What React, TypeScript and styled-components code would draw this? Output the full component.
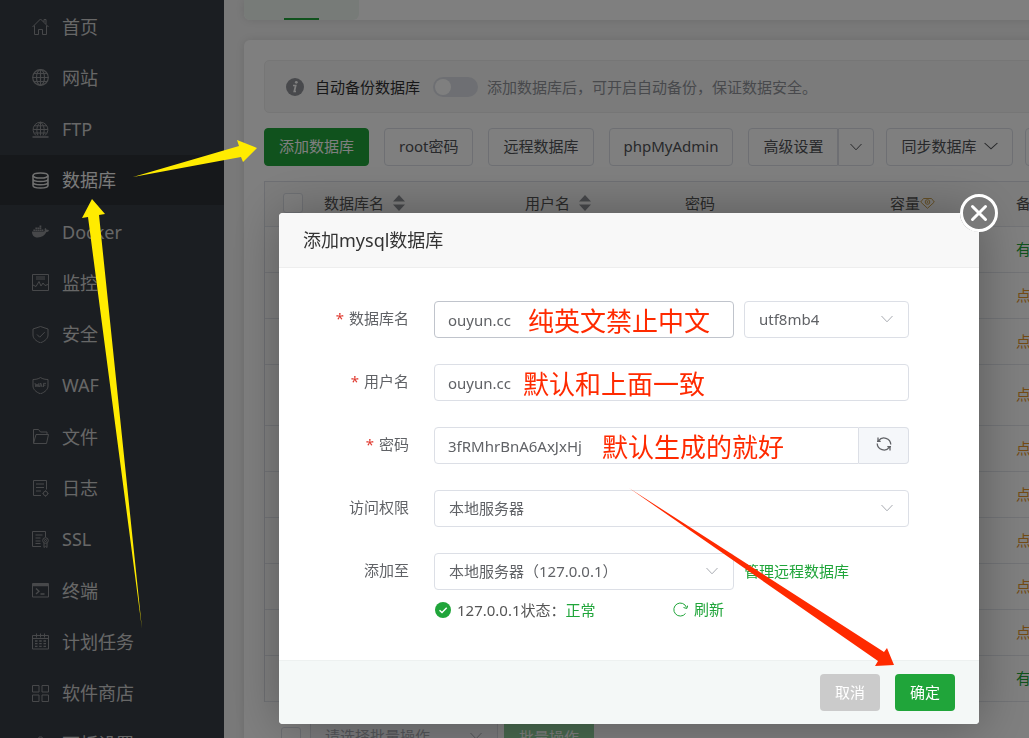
import React from 'react';
import styled, { createGlobalStyle } from 'styled-components';
import { FaDocker } from 'react-icons/fa';

const green = '#20a53a';
const border = '#dcdfe6';

const GlobalStyle = createGlobalStyle`
  * { box-sizing: border-box; }
  html, body, #root { height: 100%; }
  body {
    margin: 0;
    overflow: hidden;
    background: #f2f2f2;
    color: #555;
    font: 15px/20px "Noto Sans", "Noto Sans CJK SC", sans-serif;
  }
  button, input, select { font: inherit; color: inherit; margin: 0; }
  button { cursor: pointer; }
  a { text-decoration: none; }
`;

const Page = styled.div`
  display: flex;
  height: 100vh;
  overflow: hidden;
`;

/* ---------- sidebar ---------- */

const Sidebar = styled.nav`
  flex: 0 0 224px;
  background: #373d45;
`;

const Menu = styled.ul`
  display: flex;
  flex-direction: column;
  justify-content: space-between;
  min-height: calc(100vh + 31px);
  margin: 0;
  padding: 1px 0 0;
  list-style: none;
`;

const MenuLink = styled.a<{ $active?: boolean }>`
  display: flex;
  align-items: center;
  gap: 13px;
  height: 50px;
  padding: 1px 0 0 32px;
  font-size: 18px;
  line-height: 24px;
  color: ${p => (p.$active ? '#f4f4f4' : '#cfcfcf')};
  background: ${p => (p.$active ? '#2c3036' : 'transparent')};

  svg {
    flex: none;
    width: 17px;
    height: 17px;
    color: ${p => (p.$active ? '#e0e0e0' : '#8f9194')};
  }
`;

/* ---------- main area ---------- */

const Main = styled.main`
  flex: 1 0 1034px;
  padding: 0 20px;
`;

const TabBar = styled.div`
  display: flex;
  height: 20px;
  margin-bottom: 20px;
  background: #fff;
  border-radius: 0 0 6px 6px;
  box-shadow: 0 0 8px rgba(0, 0, 0, 0.1);
`;

const ActiveTab = styled.div`
  display: flex;
  align-items: flex-end;
  justify-content: center;
  width: 115px;
  background: #eff7f1;
  border-radius: 0 0 6px 6px;

  &::after {
    content: '';
    width: 35px;
    height: 2px;
    background: ${green};
  }
`;

const Card = styled.section`
  padding: 20px;
  min-height: 760px;
  background: #fff;
  border-radius: 6px;
  box-shadow: 0 0 8px rgba(0, 0, 0, 0.1);
`;

const Notice = styled.div`
  display: flex;
  align-items: center;
  height: 53px;
  padding: 0 21px;
  margin-bottom: 15px;
  background: #f6f6f6;
  border: 1px solid #ededed;
  border-radius: 5px;
  color: #303133;
`;

const InfoIcon = styled.svg`
  width: 18px;
  height: 18px;
  margin-right: 11px;
`;

const NoticeHint = styled.span`
  color: #909399;
`;

const Switch = styled.input`
  appearance: none;
  width: 45px;
  height: 20px;
  margin: 0 9px 0 13px;
  padding: 2px;
  background: ${border};
  border-radius: 10px;

  &::before {
    content: '';
    display: block;
    width: 16px;
    height: 16px;
    border-radius: 50%;
    background: #fff;
  }
`;

const Toolbar = styled.div`
  display: flex;
  gap: 12px;
  margin-bottom: 15px;
`;

const ButtonGroup = styled.div`
  display: flex;
  gap: 15px;
  padding-right: 3px;
`;

const ToolButton = styled.button<{ $primary?: boolean }>`
  display: flex;
  align-items: center;
  gap: 8px;
  height: 38px;
  padding: 0 14px 2px;
  border: 1px solid ${p => (p.$primary ? green : border)};
  border-radius: 4px;
  background: ${p => (p.$primary ? green : '#fff')};
  color: ${p => (p.$primary ? '#fff' : '#505256')};
  white-space: nowrap;
`;

const SplitButton = styled.div`
  display: flex;

  ${ToolButton}:first-child {
    border-radius: 4px 0 0 4px;
  }
  ${ToolButton}:last-child {
    padding: 0 11px;
    border-radius: 0 4px 4px 0;
  }
`;

const Table = styled.table`
  width: 100%;
  table-layout: fixed;
  border-collapse: separate;
  border-spacing: 0;
  border: 1px solid ${border};
  border-width: 1px 1px 0 1px;

  th, td {
    height: 46px;
    padding: 0 14px 2px;
    text-align: left;
    font-weight: 400;
    white-space: nowrap;
    border-bottom: 1px solid #e4e7ed;
  }
  th { height: 45px; background: #f8f8f8; }
  th:first-child, td:first-child { padding: 0 0 2px 18px; }
`;

const HeadCell = styled.span`
  display: flex;
  align-items: center;
`;

const SortIcon = styled.svg`
  width: 12px;
  height: 16px;
  margin-left: 9px;
`;

const TallRow = styled.tr`
  td { height: 61px; }
`;

const BackupLink = styled.a<{ $done?: boolean }>`
  color: ${p => (p.$done ? green : '#e6962c')};
`;

const Check = styled.input`
  appearance: none;
  display: block;
  width: 20px;
  height: 20px;
  border: 1px solid ${border};
  border-radius: 3px;
  background: #fff;
`;

const BatchBar = styled.div`
  display: flex;
  align-items: center;
  padding: 16px 0 0 17px;

  ${Check} { margin-right: 9px; }
`;

const BatchButton = styled.button`
  width: 90px;
  height: 32px;
  margin-left: 6px;
  border: 0;
  border-radius: 3px;
  background: #90d29d;
  color: #fff;
`;

/* ---------- dialog ---------- */

const Overlay = styled.div`
  position: fixed;
  inset: 0;
  padding: 213px 50px 0 279px;
  background: rgba(0, 0, 0, 0.5);
`;

const Dialog = styled.div`
  position: relative;
  max-width: 700px;
  background: #fff;
  border-radius: 4px;
  box-shadow: 1px 1px 50px rgba(0, 0, 0, 0.3);
`;

const DialogHeader = styled.header`
  display: flex;
  align-items: center;
  height: 55px;
  padding: 0 24px;
  background: #f8f8f8;
  border-bottom: 1px solid #eee;
  border-radius: 4px 4px 0 0;
`;

const DialogTitle = styled.h2`
  margin: 0;
  font-size: 18px;
  line-height: 24px;
  font-weight: 400;
  color: #333;
`;

const CloseButton = styled.button`
  position: absolute;
  top: -19px;
  right: -19px;
  display: flex;
  width: 38px;
  height: 38px;
  padding: 0;
  border: 0;
  border-radius: 50%;
  background: #797979;
`;

const Form = styled.form`
  padding: 33px 70px 40px 0;
`;

const FormRow = styled.div`
  display: flex;
  align-items: center;
  height: 37px;

  & + & { margin-top: 26px; }
`;

const Label = styled.label<{ $required?: boolean }>`
  flex: 0 0 155px;
  padding: 0 25px 3px 0;
  text-align: right;
  color: #606266;

  &::before {
    content: ${p => (p.$required ? "'*'" : 'none')};
    margin-right: 5px;
    color: #e0392f;
  }
`;

const Field = styled.div<{ $width?: number }>`
  position: relative;
  display: flex;
  flex: ${p => (p.$width ? `0 0 ${p.$width}px` : '1 1 0')};
  min-width: 0;
  height: 37px;
`;

const TextInput = styled.input<{ $hover?: boolean; $joined?: boolean }>`
  flex: 1;
  min-width: 0;
  padding: 0 13px;
  border: 1px solid ${p => (p.$hover ? '#c0c4cc' : border)};
  border-radius: ${p => (p.$joined ? '4px 0 0 4px' : '4px')};
  background: #fff;
  color: #606266;
  outline: none;
`;

const Select = styled.select`
  flex: 1;
  min-width: 0;
  padding: 0 14px 2px;
  border: 1px solid ${border};
  border-radius: 4px;
  appearance: none;
  background: #fff;
  color: #606266;
  opacity: 1;

  &:disabled { background: #f5f7fa; color: #a8abb2; }
`;

const FieldArrow = styled.svg`
  position: absolute;
  right: 16px;
  top: 14px;
  width: 12px;
  height: 8px;
  color: #a8abb2;
  pointer-events: none;
`;

const InputAddon = styled.button`
  display: flex;
  align-items: center;
  justify-content: center;
  width: 50px;
  padding: 0 0 3px;
  border: 1px solid ${border};
  border-left: 0;
  border-radius: 0 4px 4px 0;
  background: #f5f7fa;
  color: #606266;
`;

const Gap = styled.div`
  flex: 0 0 10px;
`;

const GreenLink = styled.a`
  display: flex;
  align-items: center;
  gap: 6px;
  padding-bottom: 2px;
  color: ${green};
  white-space: nowrap;
`;

const StatusRow = styled.div`
  display: flex;
  align-items: center;
  width: 445px;
  height: 20px;
  margin-top: 10px;
  padding-left: 156px;

  > svg { margin-right: 6px; }
  > a { margin-left: auto; }
`;

const StatusOk = styled.span`
  color: ${green};
`;

const DialogFooter = styled.footer`
  display: flex;
  justify-content: flex-end;
  gap: 15px;
  padding: 13px 24px 13px;
  background: #f4f8f7;
  border-top: 1px solid #edf1f0;
  border-radius: 0 0 4px 4px;
`;

const FooterButton = styled.button<{ $primary?: boolean }>`
  width: 60px;
  height: 37px;
  padding: 0 0 2px;
  border: 0;
  border-radius: 4px;
  background: ${p => (p.$primary ? green : '#cbcbcb')};
  color: #fff;
`;

/* ---------- tutorial marks drawn over the page ---------- */

const Note = styled.span<{ $left: number }>`
  position: absolute;
  left: ${p => p.$left}px;
  top: 0;
  font-size: 26px;
  line-height: 40px;
  color: #ff2a00;
  white-space: nowrap;
  pointer-events: none;
`;

const Arrows = styled.svg`
  position: fixed;
  left: 0;
  top: 0;
  width: 1029px;
  height: 738px;
  pointer-events: none;
`;

const Chevron = ({ width = 12 }: { width?: number }) => (
  <svg width={width} height={8} viewBox="0 0 12 8" fill="none" stroke="currentColor" strokeWidth="1" preserveAspectRatio="none">
    <path d="M.5 1 6 6.800 11.500 1" />
  </svg>
);

const SelectArrow = () => (
  <FieldArrow viewBox="0 0 12 8" fill="none" stroke="currentColor" strokeWidth="1">
    <path d="M.5 1 6 6.800 11.500 1" />
  </FieldArrow>
);

const Glyph = ({ children }: { children: React.ReactNode }) => (
  <svg viewBox="0 0 17 17" fill="none" stroke="currentColor" strokeWidth="1">
    {children}
  </svg>
);

const menu = [
  { text: '首页', icon: <Glyph><path d="M.5 9 8.500 1 16.500 9M2.500 7.500v9h4v-5h4v5h4v-9M12 4V1.500h2V6" /></Glyph> },
  { text: '网站', icon: <Glyph><g strokeWidth="1.200"><circle cx="8.500" cy="8.500" r="7.800" /><ellipse cx="8.500" cy="8.500" rx="4" ry="7.800" /><path d="M8.500.500v16M.5 8.500h16M2 4.500h13M2 12.500h13" /></g></Glyph> },
  { text: 'FTP', icon: <Glyph><path d="M4 14.500a7.400 7.400 0 1 1 9 0M6 14.500C4 10 4.500 4 8.500 1.200C12.500 4 13 10 11 14.500M8.500 1v13.500M1.200 8.500h14.600M2.500 4.800h12M2.500 12h12" /><path d="M.5 16h16" strokeWidth="1.500" /></Glyph> },
  { text: '数据库', active: true, icon: <Glyph><g strokeWidth="1.500"><ellipse cx="8.500" cy="3.500" rx="7.500" ry="2.600" /><path d="M1 3.500v10c0 3.400 15 3.400 15 0v-10M1 7c0 3.400 15 3.400 15 0M1 10.300c0 3.400 15 3.400 15 0" /></g></Glyph> },
  { text: 'Docker', icon: <FaDocker /> },
  { text: '监控', icon: <Glyph><path d="M.5.500h16v16H.500zM4 3h9M4 5h9M1 11l3 1.500L7 7.500l2 4.500 2-3 2 2.500 3-1" /></Glyph> },
  { text: '安全', icon: <Glyph><path d="M8.500.500 16 3v6c0 3-2.500 6-7.500 7.800C3.500 15 1 12 1 9V3zM5 8.500l2.700 2.700 5-5" /></Glyph> },
  { text: 'WAF', icon: <Glyph><path d="M8.500.500c2 1.500 5 2 7.500 2v6.500c0 3-2.500 6-7.500 7.800C3.500 15 1 12 1 9V2.500c2.500 0 5.500-.5 7.500-2z" /><path d="m3 6 .9 4L5 7l1.100 3L7 6M7.300 10l1.400-4 1.500 4M7.800 9h2M11.500 10V6.400H14M11.500 8.200h2" strokeWidth=".9" /></Glyph> },
  { text: '文件', icon: <Glyph><path d="M1.500 15V1.500h5l2 2.500h6.500v2.500M1.500 15.500h13l2-9H4z" /></Glyph> },
  { text: '日志', icon: <Glyph><path d="M9 15.500H1.500v-15h13v9M4 4h8M4 7.500h8M4 11h5" /><circle cx="13.500" cy="13.500" r="2.200" /><path d="M13.500 10.300v1M13.500 15.700v1M10.500 13.500h1M15.500 13.500h1" /></Glyph> },
  { text: 'SSL', icon: <Glyph><path d="M9 15.500H.500v-15h13V6M3.500 4h7M3.500 7h5M3.500 10h5M3.500 12.500h5" /><circle cx="13.500" cy="9.500" r="2.800" /><circle cx="13.500" cy="9.500" r="1" /><path d="M12 12v4.500l1.500-1.200 1.500 1.200V12" /></Glyph> },
  { text: '终端', icon: <Glyph><path d="M.5 1.500h16v13.500H.500z" /><path d="M1 3h15" strokeWidth="2.500" /><path d="m4 6.500 3 2.700-3 2.800M8.500 12h4" strokeWidth="1.300" /></Glyph> },
  { text: '计划任务', icon: <Glyph><path d="M.5 2.500h16v13.500H.500zM.500 5.500h16M4.500.500v4M8.500.500v4M12.500.500v4" /><path d="M3 8h2.500M7.200 8h2.500M11.500 8H14M3 10.700h2.500M7.200 10.700h2.500M11.500 10.700H14M3 13.400h2.500M7.200 13.400h2.500M11.500 13.400H14" strokeWidth="1.300" /></Glyph> },
  { text: '软件商店', icon: <Glyph><path d="M.5.500h6.500v6.500H.500zM10 .500h6.500v6.500H10zM.500 10h6.500v6.500H.500zM10 10h6.500v6.500H10z" /></Glyph> },
  { text: '面板设置', icon: <Glyph><path d="m7 1-.5 2L4 4.500 2 4 .800 6.500 2.500 8.500l-1.700 2L2 13l2-.5L6.500 14l.5 2h3l.5-2 2.500-1.500 2 .5 1.200-2.500-1.700-2 1.700-2L15 4l-2 .5L10.500 3 10 1z" /><circle cx="8.500" cy="8.500" r="2.500" /></Glyph> },
];

const Sort = () => (
  <SortIcon viewBox="0 0 12 16" fill="#8e9196">
    <path d="M6 0 12 6.500H0zM0 9.500h12L6 16z" />
  </SortIcon>
);

const backups = ['有备份', '点击备份', '点击备份', '点击备份', '点击备份', '点击备份', '点击备份', '点击备份', '点击备份', '有备份'];

export default function App() {
  return (
    <>
      <GlobalStyle />
      <Page>
        <Sidebar>
          <Menu>
            {menu.map(item => (
              <li key={item.text}>
                <MenuLink href="#" $active={item.active}>{item.icon}{item.text}</MenuLink>
              </li>
            ))}
          </Menu>
        </Sidebar>

        <Main>
          <TabBar><ActiveTab /></TabBar>
          <Card>
            <Notice>
              <InfoIcon viewBox="0 0 18 18">
                <circle cx="9" cy="9" r="9" fill="#909399" />
                <circle cx="10.300" cy="4.300" r="1.400" fill="#fff" />
                <path d="M7 7.500h2.700L8.300 13.500h1.700" fill="none" stroke="#fff" strokeWidth="1.700" />
              </InfoIcon>
              <label htmlFor="auto-backup">自动备份数据库</label>
              <Switch type="checkbox" role="switch" id="auto-backup" />
              <NoticeHint>添加数据库后，可开启自动备份，保证数据安全。</NoticeHint>
            </Notice>

            <Toolbar>
              <ButtonGroup>
                <ToolButton $primary>添加数据库</ToolButton>
                <ToolButton>root密码</ToolButton>
                <ToolButton>远程数据库</ToolButton>
                <ToolButton>phpMyAdmin</ToolButton>
              </ButtonGroup>
              <SplitButton>
                <ToolButton>高级设置</ToolButton>
                <ToolButton aria-label="更多设置"><Chevron /></ToolButton>
              </SplitButton>
              <ToolButton>同步数据库<Chevron width={14} /></ToolButton>
              <ToolButton aria-label="回收站" />
            </Toolbar>

            <Table>
              <colgroup>
                <col style={{ width: 45 }} />
                <col style={{ width: 201 }} />
                <col style={{ width: 160 }} />
                <col style={{ width: 205 }} />
                <col style={{ width: 126 }} />
                <col />
              </colgroup>
              <thead>
                <tr>
                  <th><Check type="checkbox" aria-label="全选" /></th>
                  <th><HeadCell>数据库名<Sort /></HeadCell></th>
                  <th><HeadCell>用户名<Sort /></HeadCell></th>
                  <th>密码</th>
                  <th>
                    <HeadCell>
                      容量
                      <svg width="15" height="12" viewBox="0 0 15 12" fill="none" stroke="#c9a050">
                        <path d="M.700 5 3.500 1.500h8L14.300 5 7.500 11.300z" />
                        <circle cx="7.500" cy="5" r="2.300" />
                        <circle cx="7.500" cy="5" r=".6" />
                      </svg>
                    </HeadCell>
                  </th>
                  <th>备份</th>
                </tr>
              </thead>
              <tbody>
                {backups.map((text, i) => {
                  const Row = i === 3 ? TallRow : 'tr';
                  return (
                    <Row key={i}>
                      <td /><td /><td /><td /><td />
                      <td><BackupLink href="#" $done={text === '有备份'}>{text}</BackupLink></td>
                    </Row>
                  );
                })}
              </tbody>
            </Table>

            <BatchBar>
              <Check type="checkbox" aria-label="选择全部" />
              <Field $width={188}>
                <Select disabled aria-label="批量操作"><option>请选择批量操作</option></Select>
                <SelectArrow />
              </Field>
              <BatchButton disabled>批量操作</BatchButton>
            </BatchBar>
          </Card>
        </Main>
      </Page>

      <Overlay>
        <Dialog role="dialog" aria-labelledby="dialog-title">
          <DialogHeader><DialogTitle id="dialog-title">添加mysql数据库</DialogTitle></DialogHeader>
          <CloseButton aria-label="关闭">
            <svg width="38" height="38" viewBox="0 0 38 38" fill="none" stroke="#fff">
              <circle cx="19" cy="19" r="17.500" strokeWidth="3" />
              <path d="m12.500 12.500 13 13m0-13-13 13" strokeWidth="3" strokeLinecap="round" />
            </svg>
          </CloseButton>

          <Form>
            <FormRow>
              <Label $required htmlFor="db-name">数据库名</Label>
              <Field $width={300}>
                <TextInput $hover id="db-name" defaultValue="ouyun.cc" />
                <Note $left={94}>纯英文禁止中文</Note>
              </Field>
              <Gap />
              <Field>
                <Select aria-label="字符集"><option>utf8mb4</option></Select>
                <SelectArrow />
              </Field>
            </FormRow>
            <FormRow>
              <Label $required htmlFor="db-user">用户名</Label>
              <Field>
                <TextInput id="db-user" defaultValue="ouyun.cc" />
                <Note $left={89}>默认和上面一致</Note>
              </Field>
            </FormRow>
            <FormRow>
              <Label $required htmlFor="db-pass">密码</Label>
              <Field>
                <TextInput $joined id="db-pass" defaultValue="3fRMhrBnA6AxJxHj" />
                <InputAddon type="button" aria-label="随机密码">
                  <svg width="16" height="16" viewBox="0 0 16 16" fill="none" stroke="currentColor" strokeWidth="1.300">
                    <path d="M1 5.300h3.700M2 1.500v3.800M2.500 4.800A6.800 6.800 0 0 1 14.800 8.500M15 10.700h-3.700M14 14.500v-3.800M13.500 11.200A6.800 6.800 0 0 1 1.200 7.500" />
                  </svg>
                </InputAddon>
                <Note $left={168}>默认生成的就好</Note>
              </Field>
            </FormRow>
            <FormRow>
              <Label htmlFor="db-access">访问权限</Label>
              <Field>
                <Select id="db-access"><option>本地服务器</option></Select>
                <SelectArrow />
              </Field>
            </FormRow>
            <FormRow>
              <Label htmlFor="db-server">添加至</Label>
              <Field $width={300}>
                <Select id="db-server"><option>本地服务器（127.0.0.1）</option></Select>
                <SelectArrow />
              </Field>
              <Gap />
              <GreenLink href="#">管理远程数据库</GreenLink>
            </FormRow>
            <StatusRow>
              <svg width="16" height="16" viewBox="0 0 16 16">
                <circle cx="8" cy="8" r="8" fill={green} />
                <path d="m4.500 8.200 2.500 2.300 4.700-4.700" fill="none" stroke="#fff" strokeWidth="1.400" />
              </svg>
              <span>127.0.0.1状态：</span>
              <StatusOk>正常</StatusOk>
              <GreenLink href="#">
                <svg width="15" height="15" viewBox="0 0 15 15" fill="none" stroke="currentColor">
                  <path d="M12.500 11.500A6.500 6.500 0 1 1 13.500 5.500M14.800 3.500l-1 3-3.300-1" />
                </svg>
                刷新
              </GreenLink>
            </StatusRow>
          </Form>

          <DialogFooter>
            <FooterButton>取消</FooterButton>
            <FooterButton $primary>确定</FooterButton>
          </DialogFooter>
        </Dialog>
      </Overlay>

      <Arrows viewBox="0 0 1029 738" aria-hidden="true">
        <path fill="#ffeb00" d="M133 177 239 146 237 140 257 148 243 162 241 157z" />
        <path fill="#ffeb00" d="M142 629 88 217 82 218 92 199 105 214 99 215z" />
        <path fill="#ff2a00" d="M629 488 884 652 887 648 894 665 875 666 878 661z" />
      </Arrows>
    </>
  );
}
